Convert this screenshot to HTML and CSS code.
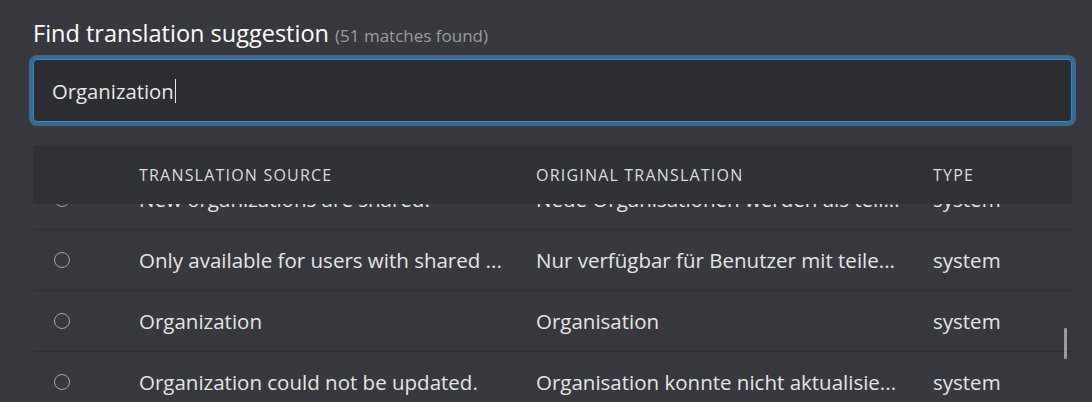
FILE: index.html
```html
<!DOCTYPE html>
<html lang="en">
<head>
<meta charset="utf-8">
<title>Find translation suggestion</title>
<link rel="stylesheet" href="styles.css">
</head>
<body>
<main class="panel">
  <h2 class="title">Find translation suggestion <span class="count">(51 matches found)</span></h2>
  <div class="search">
    <span class="search-text">Organization</span><span class="caret"></span>
  </div>
  <div class="table">
    <div class="thead">
      <div class="cell radio-col"></div>
      <div class="cell src">TRANSLATION SOURCE</div>
      <div class="cell orig">ORIGINAL TRANSLATION</div>
      <div class="cell type">TYPE</div>
    </div>
    <div class="tbody">
      <div class="row">
        <div class="cell radio-col"><span class="radio"></span></div>
        <div class="cell src">New organizations are shared.</div>
        <div class="cell orig">Neue Organisationen werden als teil...</div>
        <div class="cell type">system</div>
      </div>
      <div class="row">
        <div class="cell radio-col"><span class="radio"></span></div>
        <div class="cell src">Only available for users with shared ...</div>
        <div class="cell orig">Nur verfügbar für Benutzer mit teile...</div>
        <div class="cell type">system</div>
      </div>
      <div class="row">
        <div class="cell radio-col"><span class="radio"></span></div>
        <div class="cell src">Organization</div>
        <div class="cell orig">Organisation</div>
        <div class="cell type">system</div>
      </div>
      <div class="row">
        <div class="cell radio-col"><span class="radio"></span></div>
        <div class="cell src">Organization could not be updated.</div>
        <div class="cell orig">Organisation konnte nicht aktualisie...</div>
        <div class="cell type">system</div>
      </div>
    </div>
    <div class="scroll-thumb"></div>
  </div>
</main>
</body>
</html>
```

FILE: styles.css
```css
html, body {
  margin: 0;
  padding: 0;
  background: #38393e;
  overflow: hidden;
}
body {
  font-family: "Open Sans", "Noto Sans", sans-serif;
  color: #e4e4e6;
  width: 1092px;
  height: 402px;
}
.panel {
  padding: 18px 20px 0 33px;
  display: flex;
  flex-direction: column;
}
.title {
  margin: 0;
  font-weight: 500;
  font-size: 23.5px;
  line-height: 31px;
  height: 31px;
  color: #ffffff;
}
.count {
  font-size: 17px;
  line-height: 1;
  font-weight: 400;
  color: #9a9ba0;
}
.search {
  margin-top: 10px;
  height: 61px;
  border: 1px solid #2f8bd2;
  border-radius: 4px;
  box-shadow: 0 0 0 4px #3a6a90;
  background: #2d2e32;
  display: flex;
  align-items: center;
  padding-left: 18px;
  font-size: 20.3px;
  font-weight: 500;
  color: #e8e8ea;
}
.caret {
  display: inline-block;
  width: 1px;
  height: 24px;
  background: #e8e8ea;
  margin-left: 1px;
}
.table {
  margin-top: 23px;
  position: relative;
  height: 257px;
  overflow: hidden;
}
.thead {
  position: absolute;
  top: 0;
  left: 0;
  right: 0;
  height: 59px;
  background: #313236;
  display: flex;
  align-items: center;
  z-index: 2;
  font-size: 16px;
  font-weight: 500;
  letter-spacing: 1.2px;
  color: #dcdcde;
}
.tbody {
  padding-top: 24px;
}
.row {
  display: flex;
  align-items: center;
  height: 60px;
  border-bottom: 1px solid #2e2f33;
  font-size: 20.5px;
  font-weight: 500;
}
.cell {
  white-space: nowrap;
  overflow: hidden;
}
.radio-col {
  width: 106px;
  flex: none;
  display: flex;
  align-items: center;
  padding-left: 21px;
  box-sizing: border-box;
}
.src, .orig {
  width: 397px;
  flex: none;
}
.type {
  flex: 1;
}
.radio {
  width: 16px;
  height: 16px;
  border: 1.5px solid #a3a4a8;
  border-radius: 50%;
  box-sizing: border-box;
}
.scroll-thumb {
  position: absolute;
  right: 5px;
  top: 183px;
  width: 3px;
  height: 31px;
  background: #9b9b9f;
  border-radius: 1px;
  z-index: 3;
}
```
